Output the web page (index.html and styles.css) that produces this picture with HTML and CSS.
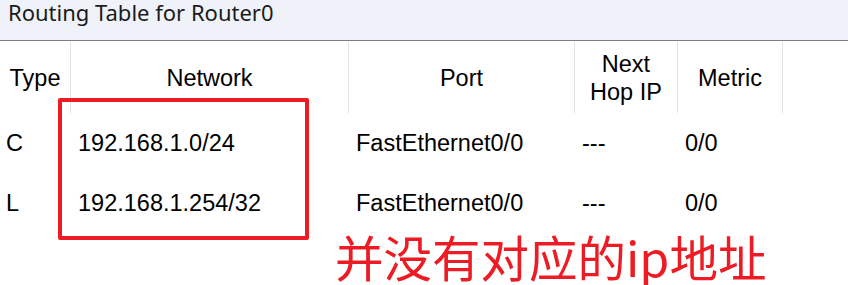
FILE: index.html
```html
<!DOCTYPE html>
<html lang="zh">
<head>
<meta charset="utf-8">
<title>Routing Table for Router0</title>
<link rel="stylesheet" href="styles.css">
</head>
<body>
<div class="window">
  <div class="titlebar">Routing Table for Router0</div>
  <div class="table">
    <div class="th">Type</div>
    <div class="th">Network</div>
    <div class="th">Port</div>
    <div class="th">Next<br>Hop IP</div>
    <div class="th">Metric</div>
    <div class="th blank"></div>

    <div class="td">C</div>
    <div class="td">192.168.1.0/24</div>
    <div class="td">FastEthernet0/0</div>
    <div class="td">---</div>
    <div class="td">0/0</div>
    <div class="td"></div>

    <div class="td">L</div>
    <div class="td">192.168.1.254/32</div>
    <div class="td">FastEthernet0/0</div>
    <div class="td">---</div>
    <div class="td">0/0</div>
    <div class="td"></div>
  </div>
  <div class="mark-box"></div>
  <div class="mark-note">并没有对应的ip地址</div>
</div>
</body>
</html>
```
FILE: styles.css
```css
html, body {
  margin: 0;
  padding: 0;
  background: #ffffff;
}
.window {
  position: relative;
  width: 848px;
  height: 285px;
  overflow: hidden;
  background: #ffffff;
}
.titlebar {
  height: 41px;
  box-sizing: border-box;
  padding: 0 0 0 8px;
  background: #eff2f9;
  border-bottom: 1px solid #7f7f7f;
  font-family: "Noto Sans", "Open Sans", sans-serif;
  font-size: 22px;
  line-height: 24px;
  color: #1b1b1b;
}
.table {
  display: grid;
  grid-template-columns: 71px 278px 226px 103px 105px 1fr;
  grid-template-rows: 72px 60px 60px;
  font-family: "Liberation Sans", Arial, sans-serif;
  font-size: 23.5px;
  color: #000;
}
.th {
  display: flex;
  align-items: center;
  justify-content: center;
  text-align: center;
  line-height: 28px;
  border-right: 1px solid #e2e2e2;
  margin-top: 1px;
}
.th.blank {
  border-right: none;
}
.td {
  display: flex;
  align-items: center;
  padding-left: 7px;
}
.table .td:nth-child(6n+1) {
  padding-left: 6px;
}
.mark-box {
  position: absolute;
  left: 58px;
  top: 98px;
  width: 251px;
  height: 142px;
  box-sizing: border-box;
  border: 4px solid #ed1c24;
  border-radius: 2px;
}
.mark-note {
  position: absolute;
  left: 335px;
  top: 232px;
  font-family: "Noto Sans CJK SC", sans-serif;
  font-size: 48.5px;
  line-height: 48px;
  color: #ed1c24;
  white-space: nowrap;
}
```
